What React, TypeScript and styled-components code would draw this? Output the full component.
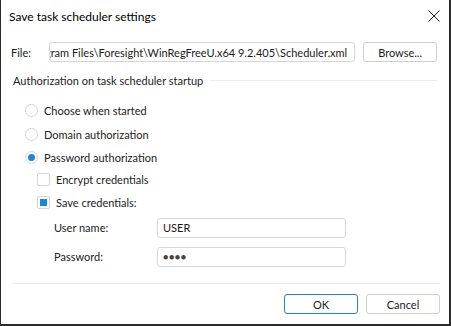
import React, { useState } from 'react';
import styled, { createGlobalStyle } from 'styled-components';

const GlobalStyle = createGlobalStyle`
  html, body {
    margin: 0;
    padding: 0;
    background: #ffffff;
  }
  * {
    box-sizing: border-box;
  }
`;

const FILE_PATH = 'C:\\Program Files\\Foresight\\WinRegFreeU.x64 9.2.405\\Scheduler.xml';

type AuthMode = 'choose' | 'domain' | 'password';

const App: React.FC = () => {
  const [mode, setMode] = useState<AuthMode>('password');
  const [encrypt, setEncrypt] = useState(false);
  const [save, setSave] = useState(true);

  return (
    <>
      <GlobalStyle />
      <Window>
        <TitleBar>
          <Title>Save task scheduler settings</Title>
          <CloseButton aria-label="Close">
            <svg width="12" height="12" viewBox="0 0 12 12">
              <path d="M0.5 0.5 L11.5 11.5 M11.5 0.5 L0.5 11.5" stroke="#1f1f1f" strokeWidth="1" fill="none" />
            </svg>
          </CloseButton>
        </TitleBar>

        <Body>
          <FileRow>
            <FieldLabel>File:</FieldLabel>
            <PathBox>
              <PathText>{FILE_PATH}</PathText>
            </PathBox>
            <Button>Browse...</Button>
          </FileRow>

          <GroupHeader>
            <span>Authorization on task scheduler startup</span>
            <GroupLine />
          </GroupHeader>

          <OptionList>
            <RadioRow onClick={() => setMode('choose')}>
              <Radio checked={mode === 'choose'} />
              <OptionText>Choose when started</OptionText>
            </RadioRow>
            <RadioRow onClick={() => setMode('domain')}>
              <Radio checked={mode === 'domain'} />
              <OptionText>Domain authorization</OptionText>
            </RadioRow>
            <RadioRow onClick={() => setMode('password')}>
              <Radio checked={mode === 'password'} />
              <OptionText>Password authorization</OptionText>
            </RadioRow>
          </OptionList>

          <CheckList>
            <CheckRow onClick={() => setEncrypt(!encrypt)}>
              <Checkbox checked={encrypt} />
              <OptionText>Encrypt credentials</OptionText>
            </CheckRow>
            <CheckRow onClick={() => setSave(!save)}>
              <Checkbox checked={save} />
              <OptionText>Save credentials:</OptionText>
            </CheckRow>
          </CheckList>

          <CredGrid>
            <CredLabel>User name:</CredLabel>
            <TextBox>USER</TextBox>
            <CredLabel>Password:</CredLabel>
            <TextBox>
              <Dots>●●●●</Dots>
            </TextBox>
          </CredGrid>
        </Body>

        <Footer>
          <Button primary>OK</Button>
          <Button>Cancel</Button>
        </Footer>
      </Window>
    </>
  );
};

const Window = styled.div`
  width: 451px;
  height: 326px;
  background: #ffffff;
  border-left: 1px solid #2b2b2b;
  border-right: 2px solid #2b2b2b;
  border-bottom: 2px solid #2b2b2b;
  display: flex;
  flex-direction: column;
  font-family: Lato, 'Noto Sans', sans-serif;
  font-size: 11px;
  color: #1b1b1b;
`;

const TitleBar = styled.div`
  height: 32px;
  display: flex;
  align-items: center;
  justify-content: space-between;
  padding-left: 8px;
  padding-right: 8px;
`;

const Title = styled.div`
  font-size: 12px;
  color: #000000;
`;

const CloseButton = styled.div`
  width: 14px;
  height: 14px;
  display: flex;
  align-items: center;
  justify-content: center;
`;

const Body = styled.div`
  flex: 1;
  padding: 10px 12px 0 9px;
  display: flex;
  flex-direction: column;
`;

const FileRow = styled.div`
  display: flex;
  align-items: center;
  height: 20px;
`;

const FieldLabel = styled.div`
  width: 39px;
  padding-left: 1px;
  color: #222222;
`;

const PathBox = styled.div`
  width: 307px;
  height: 20px;
  border: 1px solid #d6d6d6;
  border-radius: 3px;
  overflow: hidden;
  display: flex;
  justify-content: flex-end;
  align-items: center;
  padding-right: 7px;
`;

const PathText = styled.div`
  white-space: nowrap;
  flex-shrink: 0;
`;

const Button = styled.div<{ primary?: boolean }>`
  width: 74px;
  height: 20px;
  margin-left: 8px;
  border: 1px solid ${(p) => (p.primary ? '#2c7fc4' : '#d0d0d0')};
  border-radius: 3px;
  display: flex;
  align-items: center;
  justify-content: center;
  background: #ffffff;
  color: #1b1b1b;
`;

const GroupHeader = styled.div`
  margin-top: 10px;
  padding-left: 3px;
  height: 16px;
  display: flex;
  align-items: center;
  color: #222222;
`;

const GroupLine = styled.div`
  flex: 1;
  height: 1px;
  background: #ececec;
  margin-left: 7px;
`;

const OptionList = styled.div`
  margin-top: 11px;
  padding-left: 15px;
  display: flex;
  flex-direction: column;
`;

const RadioRow = styled.div`
  height: 23.5px;
  display: flex;
  align-items: center;
  cursor: pointer;
`;

const Radio = styled.div<{ checked: boolean }>`
  width: 13px;
  height: 13px;
  border-radius: 50%;
  border: 1px solid #d4d4d4;
  background: #ffffff;
  display: flex;
  align-items: center;
  justify-content: center;
  margin-right: 6px;

  &::after {
    content: '';
    width: 7px;
    height: 7px;
    border-radius: 50%;
    background: ${(p) => (p.checked ? '#1f86d1' : 'transparent')};
  }
`;

const OptionText = styled.span`
  color: #222222;
`;

const CheckList = styled.div`
  margin-top: -2px;
  padding-left: 27px;
  display: flex;
  flex-direction: column;
`;

const CheckRow = styled.div`
  height: 23px;
  display: flex;
  align-items: center;
  cursor: pointer;
`;

const Checkbox = styled.div<{ checked: boolean }>`
  width: 13px;
  height: 13px;
  border-radius: 2px;
  border: 1px solid #d4d4d4;
  background: #ffffff;
  display: flex;
  align-items: center;
  justify-content: center;
  margin-right: 6px;

  &::after {
    content: '';
    width: 7px;
    height: 7px;
    background: ${(p) => (p.checked ? '#1f86d1' : 'transparent')};
  }
`;

const CredGrid = styled.div`
  margin-top: 4px;
  padding-left: 44px;
  display: grid;
  grid-template-columns: 103px 189px;
  row-gap: 9px;
  align-items: center;
`;

const CredLabel = styled.div`
  color: #222222;
`;

const TextBox = styled.div`
  height: 20px;
  border: 1px solid #d6d6d6;
  border-radius: 3px;
  display: flex;
  align-items: center;
  padding-left: 5px;
  color: #1b1b1b;
`;

const Dots = styled.span`
  font-size: 9px;
  letter-spacing: 0.5px;
  color: #444444;
`;

const Footer = styled.div`
  margin: 0 9px 0 11px;
  border-top: 1px solid #ececec;
  height: 41px;
  display: flex;
  justify-content: flex-end;
  align-items: center;
  padding-top: 9px;
  padding-bottom: 9px;
`;

export default App;
